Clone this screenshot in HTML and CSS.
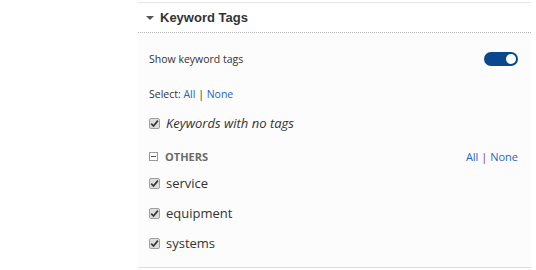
FILE: index.html
```html
<!DOCTYPE html>
<html lang="en">
<head>
    <meta charset="UTF-8">
    <meta name="viewport" content="width=device-width, initial-scale=1.0">
    <title>Keyword Tags</title>
    <link rel="stylesheet" href="styles.css">
</head>
<body>
    <div class="panel">
        <!-- Header -->
        <div class="panel-header">
            <span class="caret"></span>
            <span class="panel-title">Keyword Tags</span>
        </div>

        <div class="panel-body">
            <!-- Toggle -->
            <div class="row row-toggle">
                <span class="small-label">Show keyword tags</span>
                <span class="toggle"><span class="knob"></span></span>
            </div>

            <!-- Select all / none -->
            <div class="row row-select">
                <span class="small-label">Select: <a href="#">All</a> | <a href="#">None</a></span>
            </div>

            <div class="row row-item">
                <span class="check">
                    <svg width="9" height="9" viewBox="0 0 9 9"><path d="M1.2 4.6 L3.5 7 L7.9 1.6" fill="none" stroke="#3a3a3a" stroke-width="1.8"/></svg>
                </span>
                <span class="item-label italic">Keywords with no tags</span>
            </div>

            <!-- Group -->
            <div class="row row-group">
                <span class="minus-box"></span>
                <span class="group-title">OTHERS</span>
                <span class="group-links"><a href="#">All</a> <span class="sep">|</span> <a href="#">None</a></span>
            </div>

            <div class="row row-item">
                <span class="check">
                    <svg width="9" height="9" viewBox="0 0 9 9"><path d="M1.2 4.6 L3.5 7 L7.9 1.6" fill="none" stroke="#3a3a3a" stroke-width="1.8"/></svg>
                </span>
                <span class="item-label">service</span>
            </div>
            <div class="row row-item">
                <span class="check">
                    <svg width="9" height="9" viewBox="0 0 9 9"><path d="M1.2 4.6 L3.5 7 L7.9 1.6" fill="none" stroke="#3a3a3a" stroke-width="1.8"/></svg>
                </span>
                <span class="item-label">equipment</span>
            </div>
            <div class="row row-item">
                <span class="check">
                    <svg width="9" height="9" viewBox="0 0 9 9"><path d="M1.2 4.6 L3.5 7 L7.9 1.6" fill="none" stroke="#3a3a3a" stroke-width="1.8"/></svg>
                </span>
                <span class="item-label">systems</span>
            </div>
        </div>
    </div>
</body>
</html>
```

FILE: styles.css
```css
body {
    margin: 0;
    background: #fff;
    font-family: "Open Sans", "Noto Sans", sans-serif;
    color: #333;
}
a {
    color: #1e64c8;
    text-decoration: none;
}
.panel {
    margin: 2px 0 0 138px;
    width: 393px;
    border-top: 1px solid #e6e6e6;
    border-bottom: 1px solid #dcdcdc;
}
.panel-header {
    height: 29px;
    display: flex;
    align-items: center;
    padding-left: 8px;
    border-bottom: 1px dotted #b4b4b4;
    background: #fff;
}
.caret {
    width: 0;
    height: 0;
    border-left: 4px solid transparent;
    border-right: 4px solid transparent;
    border-top: 4px solid #555;
    margin-right: 6px;
    margin-top: 1px;
}
.panel-title {
    font-family: "Liberation Sans", Arial, sans-serif;
    font-weight: bold;
    font-size: 13px;
    color: #333;
}
.panel-body {
    background: #fcfcfc;
    padding: 13px 13px 9px 11px;
}
.row {
    display: flex;
    align-items: center;
}
.row-toggle {
    height: 26px;
    justify-content: space-between;
}
.row-select {
    height: 28px;
    margin-top: 8px;
}
.row-item {
    height: 30px;
}
.row-group {
    height: 24px;
    margin-top: 6px;
}
.small-label {
    font-size: 10.5px;
}
.toggle {
    width: 34px;
    height: 14px;
    border-radius: 7px;
    background: #0b478c;
    display: flex;
    align-items: center;
    justify-content: flex-end;
    padding-right: 2px;
    box-sizing: border-box;
}
.knob {
    width: 10px;
    height: 10px;
    border-radius: 50%;
    background: #fff;
}
.check {
    width: 11px;
    height: 11px;
    box-sizing: border-box;
    border: 1px solid #a0a0a0;
    background: #dedede;
    border-radius: 2px;
    display: flex;
    align-items: center;
    justify-content: center;
    margin-right: 6px;
}
.item-label {
    font-size: 13px;
    color: #333;
}
.italic {
    font-style: italic;
}
.minus-box {
    width: 9px;
    height: 9px;
    box-sizing: border-box;
    border: 1px solid #999;
    background: #fff;
    display: flex;
    align-items: center;
    justify-content: center;
    margin-right: 7px;
}
.minus-box::before {
    content: "";
    width: 5px;
    height: 1px;
    background: #555;
}
.group-title {
    font-size: 11px;
    font-weight: bold;
    color: #6a6a6a;
}
.group-links {
    margin-left: auto;
    font-size: 11px;
}
.sep {
    color: #8a2a8a;
}
```
